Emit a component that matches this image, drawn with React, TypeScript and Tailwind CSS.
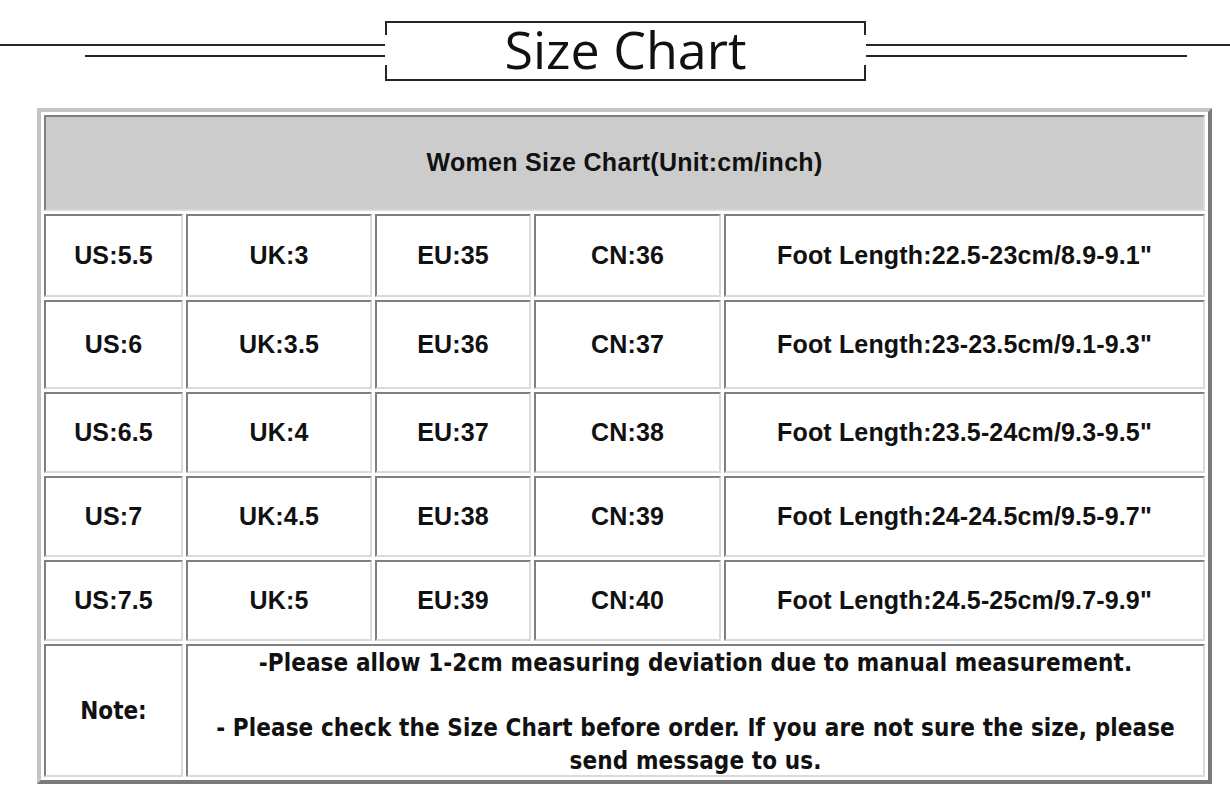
import React from "react";

const rows = [
  ["US:5.5", "UK:3", "EU:35", "CN:36", "Foot Length:22.5-23cm/8.9-9.1\""],
  ["US:6", "UK:3.5", "EU:36", "CN:37", "Foot Length:23-23.5cm/9.1-9.3\""],
  ["US:6.5", "UK:4", "EU:37", "CN:38", "Foot Length:23.5-24cm/9.3-9.5\""],
  ["US:7", "UK:4.5", "EU:38", "CN:39", "Foot Length:24-24.5cm/9.5-9.7\""],
  ["US:7.5", "UK:5", "EU:39", "CN:40", "Foot Length:24.5-25cm/9.7-9.9\""],
];

function Cell({ children, className = "" }: { children: React.ReactNode; className?: string }) {
  return (
    <div
      className={
        "flex items-center justify-center border-2 border-t-[#7f7f7f] border-l-[#7f7f7f] border-b-[#dadada] border-r-[#dadada] text-center " +
        className
      }
    >
      {children}
    </div>
  );
}

export default function App() {
  return (
    <div className="w-[1230px] h-[800px] bg-white overflow-hidden pt-[21px]">
      {/* Title */}
      <div className="flex h-[60px]">
        <div className="w-[385px] flex flex-col pt-[23px] gap-[9px]">
          <div className="h-[2px] bg-[#262626]" />
          <div className="h-[2px] bg-[#262626] ml-[85px]" />
        </div>
        <div className="flex w-[481px] border-y-2 border-[#262626]">
          <div className="flex flex-col justify-between w-[2px]">
            <div className="h-[12px] bg-[#262626]" />
            <div className="h-[14px] bg-[#262626]" />
          </div>
          <div className="flex-1 flex items-center justify-center pb-[4px] font-['Open_Sans',sans-serif] text-[52px] leading-none text-[#111]">
            Size Chart
          </div>
          <div className="flex flex-col justify-between w-[2px]">
            <div className="h-[12px] bg-[#262626]" />
            <div className="h-[14px] bg-[#262626]" />
          </div>
        </div>
        <div className="flex-1 flex flex-col pt-[23px] gap-[9px]">
          <div className="h-[2px] bg-[#262626]" />
          <div className="h-[2px] bg-[#262626] mr-[43px]" />
        </div>
      </div>

      {/* Table */}
      <div className="mt-[27px] ml-[37px] w-[1175px] border-4 border-t-[#c4c4c4] border-l-[#c4c4c4] border-b-[#7a7a7a] border-r-[#7a7a7a] p-[3px]">
        <div className="grid grid-cols-[139px_186px_156px_187px_481px] grid-rows-[96px_83px_89px_81px_81px_81px_133px] gap-[3px] font-['Liberation_Sans',Arial,sans-serif] font-bold text-[25px] text-[#111]">
          <Cell className="col-span-5 bg-[#cccccc]">
            <span className="tracking-[0.3px]">Women Size Chart(Unit:cm/inch)</span>
          </Cell>
          {rows.map((r, i) => (
            <React.Fragment key={i}>
              {r.map((c, j) => (
                <Cell key={j}>
                  <span className="tracking-[0.15px]">{c}</span>
                </Cell>
              ))}
            </React.Fragment>
          ))}
          <Cell className="font-['DejaVu_Sans_Condensed','DejaVu_Sans',sans-serif] text-[24px]">Note:</Cell>
          <Cell className="col-span-4 items-start pt-[1px] font-['DejaVu_Sans_Condensed','DejaVu_Sans',sans-serif] text-[24px] leading-[32.5px] tracking-[0.1px]">
            <div>
              -Please allow 1-2cm measuring deviation due to manual measurement.
              <br />
              <br />
              - Please check the Size Chart before order. If you are not sure the size, please
              <br />
              send message to us.
            </div>
          </Cell>
        </div>
      </div>
    </div>
  );
}
